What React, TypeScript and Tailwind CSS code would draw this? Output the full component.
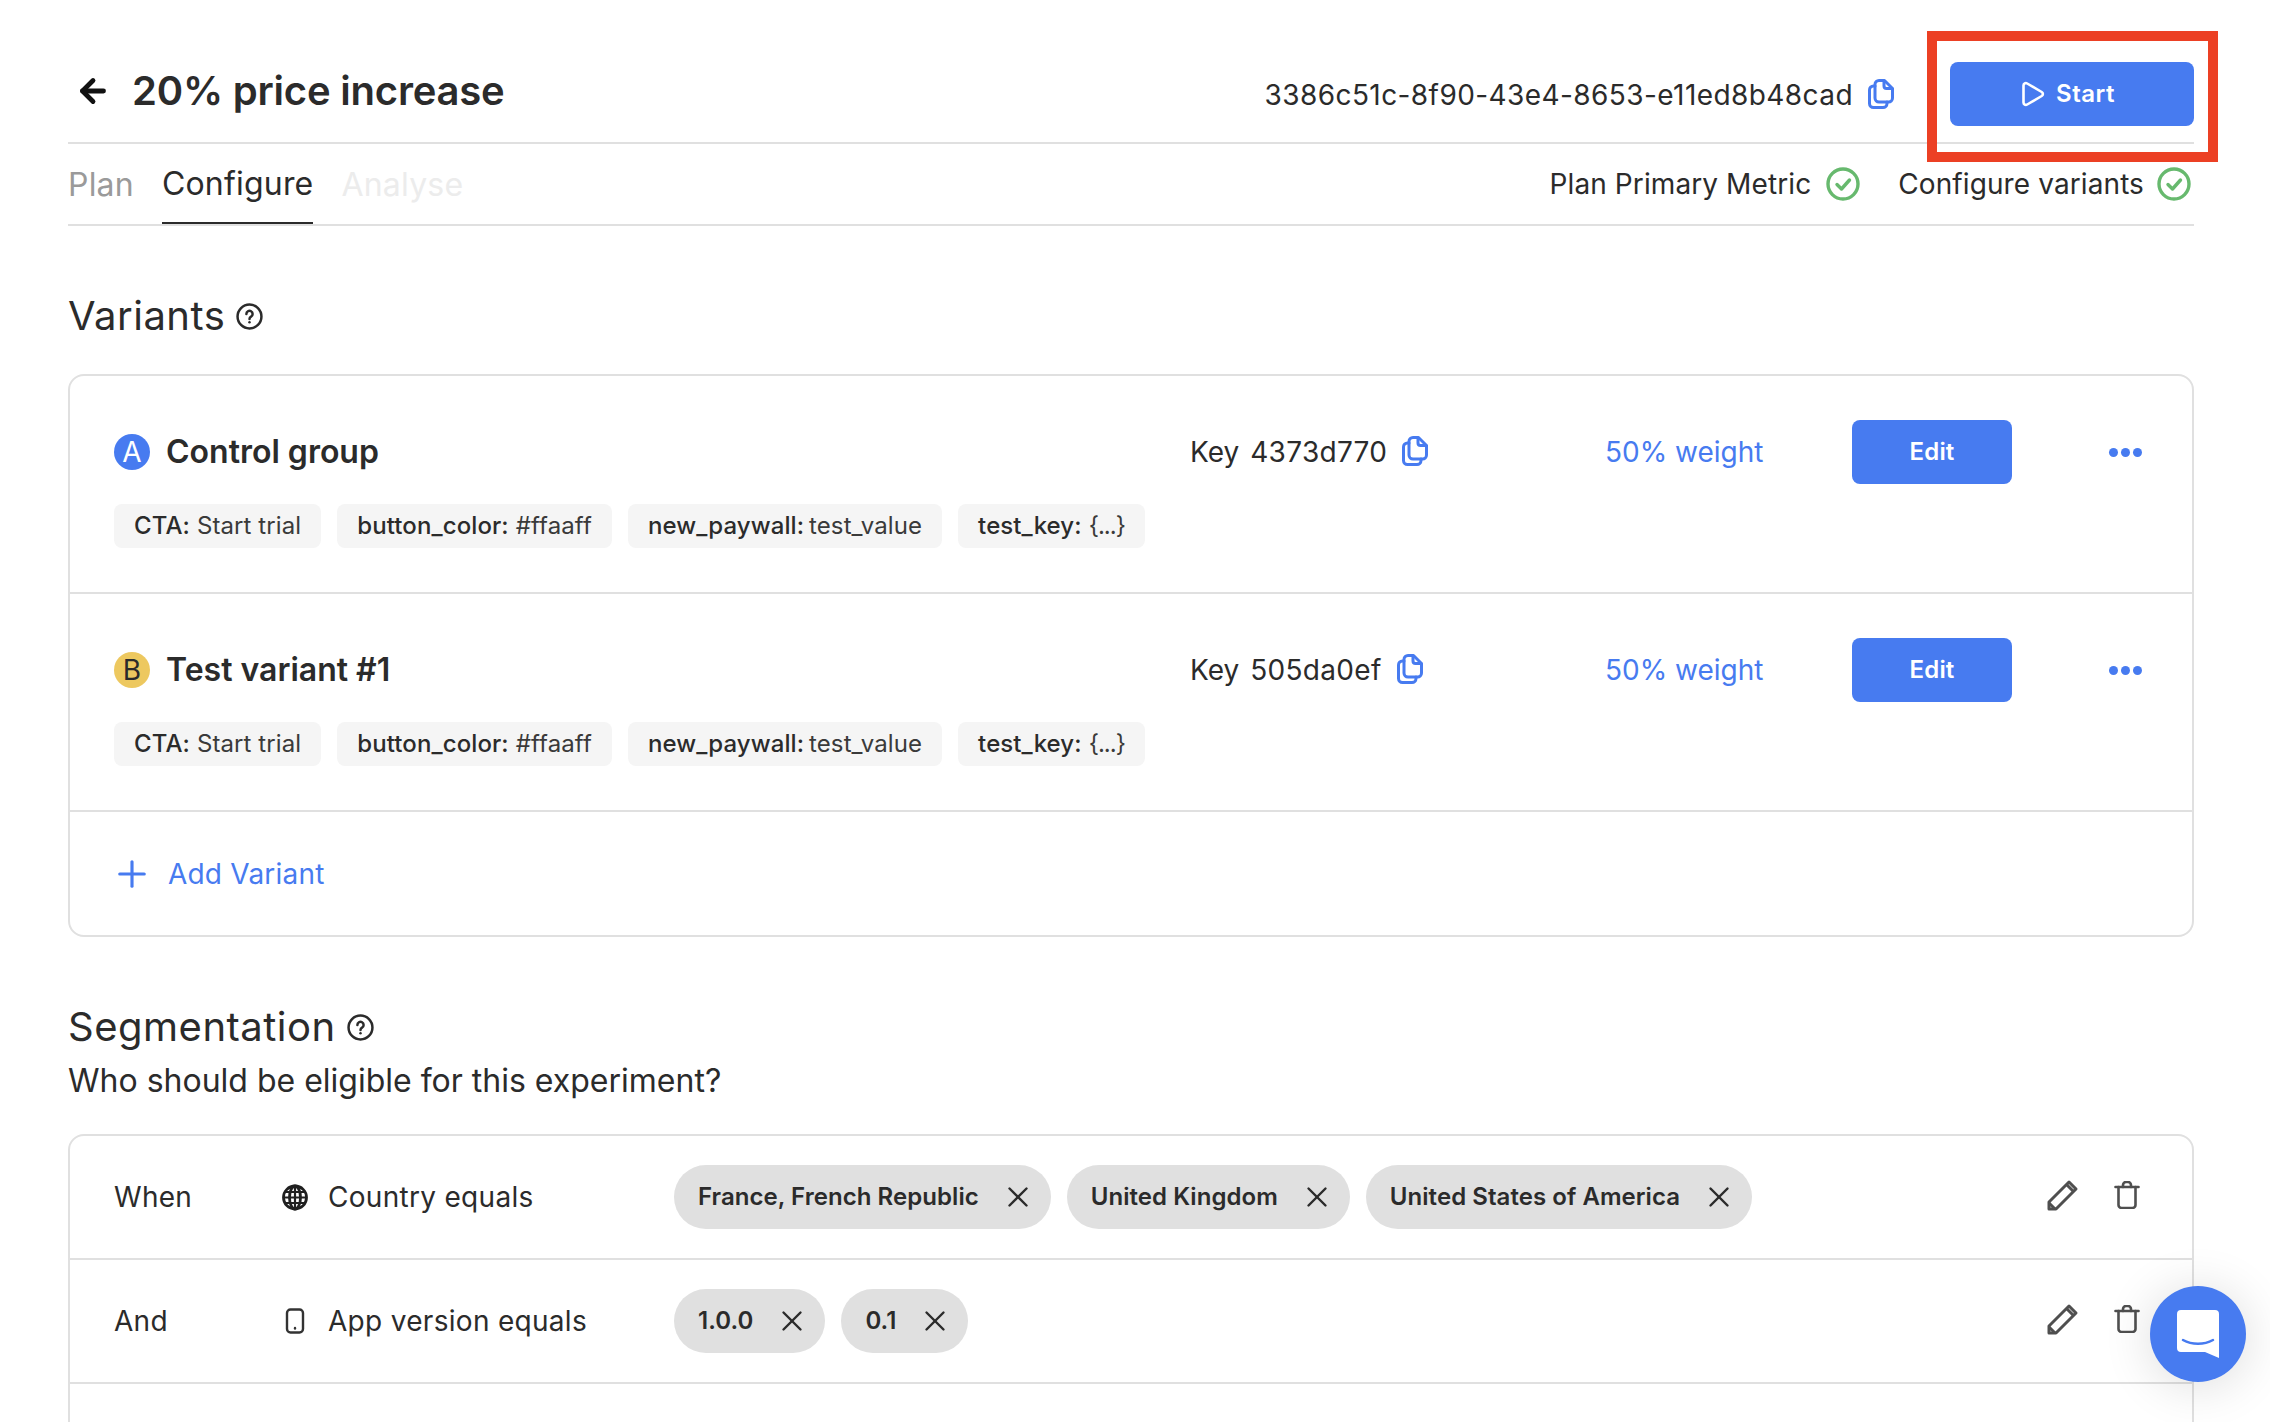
import React from "react";
import { ArrowLeft, Plus, X } from "lucide-react";

const Copy = ({ className = "" }: { className?: string }) => (
  <svg viewBox="0 0 26 30" className={className} fill="none" stroke="#477bf0" strokeWidth="3" strokeLinejoin="round" strokeLinecap="round">
    <path d="M11 1.500h5.500l8 8V19a4 4 0 0 1-4 4H11a4 4 0 0 1-4-4V5.500a4 4 0 0 1 4-4z" />
    <path d="M16 2v5a2.500 2.500 0 0 0 2.500 2.500H24" />
    <path d="M7 7H5.500a4 4 0 0 0-4 4v13.500a4 4 0 0 0 4 4H15a4 4 0 0 0 4-4V23" />
  </svg>
);

const Help = () => (
  <svg viewBox="0 0 26 26" className="w-[27px] h-[27px]" fill="none" stroke="#2b2b2b" strokeWidth="2.400" strokeLinecap="round">
    <circle cx="13" cy="13" r="11.500" />
    <path d="M10 10.500a3 3 0 1 1 4.500 2.600c-1 .6-1.500 1.100-1.500 2.200" />
    <path d="M13 18.500v.1" />
  </svg>
);

const Check = () => (
  <svg viewBox="0 0 34 34" className="w-[34px] h-[34px]" fill="none" stroke="#67b96e" strokeWidth="3.400" strokeLinecap="round" strokeLinejoin="round">
    <circle cx="17" cy="17" r="15" />
    <path d="M11 17.500l4.500 4.500 8-9" />
  </svg>
);

const Pencil = () => (
  <svg viewBox="0 0 32 32" className="w-[32px] h-[32px]" fill="none" stroke="#4f4f4f" strokeWidth="3" strokeLinejoin="round">
    <path d="M2 30v-7L22 3l7 7-20 20z" />
    <path d="M20 6l6 6" />
    <path d="M2 24l6 6" />
  </svg>
);

const Trash = () => (
  <svg viewBox="0 0 26 28" className="w-[26px] h-[28px]" fill="none" stroke="#4f4f4f" strokeWidth="2.600" strokeLinecap="round" strokeLinejoin="round">
    <path d="M1.500 6h23" />
    <path d="M9 6V4a3 3 0 0 1 3-3h2a3 3 0 0 1 3 3v2" />
    <path d="M4.500 6v18a3 3 0 0 0 3 3h11a3 3 0 0 0 3-3V6" />
  </svg>
);

const Globe = () => (
  <svg viewBox="0 0 26 26" className="w-[27px] h-[27px]" fill="none" stroke="#1f1f1f" strokeWidth="2.800">
    <circle cx="13" cy="13" r="11.500" />
    <ellipse cx="13" cy="13" rx="5.500" ry="11.500" />
    <path d="M13 1.500v23M1.500 13h23M3 7.500h20M3 18.500h20" strokeWidth="2.200" />
  </svg>
);

const Phone = () => (
  <svg viewBox="0 0 20 26" className="w-[20px] h-[26px]" fill="none" stroke="#333" strokeWidth="2.400">
    <rect x="2" y="1.500" width="16" height="23" rx="3.500" />
    <path d="M10 20v.5" strokeLinecap="round" />
  </svg>
);

const Chip = ({ k, v, valueClass }: { k: string; v: string; valueClass: string }) => (
  <div className="h-[44px] px-5 flex items-center rounded-lg bg-[#f5f5f5] text-[24px] tracking-[0.1px] whitespace-nowrap text-[#2b2b2b]">
    <span className="font-medium">{k}:</span>
    <span className={valueClass}>{v}</span>
  </div>
);

const Variant = ({ letter, name, keyId, badge, letterColor }: { letter: string; name: string; keyId: string; badge: string; letterColor: string }) => (
  <div className="h-[218px] border-b-2 border-[#e0e0e0] pl-[44px] pr-[50px] pt-[44px] shrink-0">
    <div className="flex items-center h-[64px]">
      <div className="w-[400px] flex items-center shrink-0 grow">
        <div className={`w-[36px] h-[36px] rounded-full flex items-center justify-center text-[28px] ${badge} ${letterColor}`}>{letter}</div>
        <div className="ml-[16px] text-[32px] font-semibold text-[#2b2b2b]">{name}</div>
      </div>
      <div className="w-[415px] flex items-center text-[28px] text-[#2b2b2b] shrink-0">
        <span>Key</span>
        <span className="ml-[11px] tracking-[0.3px]">{keyId}</span>
        <Copy className="ml-[15px] w-[26px] h-[30px] -mt-[2px]" />
      </div>
      <div className="w-[247px] text-[28px] text-[#477bf0] shrink-0">50% weight</div>
      <div className="w-[160px] h-[64px] rounded-lg bg-[#477bf0] text-white text-[24px] font-semibold tracking-[0.2px] flex items-center justify-center shrink-0">Edit</div>
      <div className="ml-[97px] flex gap-[3px] shrink-0">
        <span className="w-[9px] h-[9px] rounded-full bg-[#477bf0]" />
        <span className="w-[9px] h-[9px] rounded-full bg-[#477bf0]" />
        <span className="w-[9px] h-[9px] rounded-full bg-[#477bf0]" />
      </div>
    </div>
    <div className="flex gap-4 mt-[20px]">
      <Chip k="CTA" v="Start trial" valueClass="ml-[7px] text-[#3a3a3a]" />
      <Chip k="button_color" v="#ffaaff" valueClass="ml-[7px] text-[#3a3a3a]" />
      <Chip k="new_paywall" v="test_value" valueClass="ml-[5px] text-[#3a3a3a]" />
      <Chip k="test_key" v="{...}" valueClass="ml-[7px] text-[#3a3a3a] tracking-[-1px]" />
    </div>
  </div>
);

const Pill = ({ label }: { label: string }) => (
  <div className="h-[64px] pl-6 pr-[16px] rounded-full bg-[#e0e0e0] flex items-center text-[24px] font-semibold tracking-[0.05px] text-[#2b2b2b] whitespace-nowrap">
    <span>{label}</span>
    <X className="ml-[22px] w-[34px] h-[34px]" strokeWidth={1.7} color="#2b2b2b" />
  </div>
);

const SegRow = ({ word, icon, text, pills }: { word: string; icon: React.ReactNode; text: string; pills: string[] }) => (
  <div className="h-[124px] border-b-2 border-[#e0e0e0] pl-[44px] pr-[50px] flex items-center shrink-0">
    <div className="w-[168px] text-[28px] tracking-[0.3px] text-[#2b2b2b] shrink-0">{word}</div>
    <div className="w-[26px] flex justify-center shrink-0">{icon}</div>
    <div className="ml-[20px] w-[346px] text-[28px] tracking-[0.3px] text-[#2b2b2b] shrink-0">{text}</div>
    <div className="flex gap-4 grow">
      {pills.map((p) => (
        <Pill key={p} label={p} />
      ))}
    </div>
    <div className="flex items-center gap-[35px] -mt-[5px] shrink-0 pr-[2px]">
      <Pencil />
      <Trash />
    </div>
  </div>
);

export default function App() {
  return (
    <div className="relative h-[1422px] overflow-hidden bg-white pl-[68px] pr-[76px] font-['Inter',sans-serif] text-[#2b2b2b]">
      <header className="h-[144px] pt-[46px] border-b-2 border-[#e0e0e0] flex items-center">
        <ArrowLeft className="ml-[7px] w-[36px] h-[36px] -mt-[6px]" strokeWidth={3.2} color="#111" />
        <h1 className="ml-[21px] -mt-[6px] text-[40px] font-semibold tracking-[-0.2px]">20% price increase</h1>
        <div className="ml-auto flex items-center">
          <span className="text-[28px] tracking-[0.42px] mt-[2px]">3386c51c-8f90-43e4-8653-e11ed8b48cad</span>
          <Copy className="ml-[15px] w-[26px] h-[30px] -mt-[1px]" />
        </div>
        <div className="ml-[56px] w-[244px] h-[64px] pr-2 rounded-lg bg-[#477bf0] text-white text-[24px] font-semibold tracking-[0.5px] flex items-center justify-center">
          <svg viewBox="0 0 24 26" className="w-[24px] h-[26px] mr-[11px]" fill="none" stroke="#fff" strokeWidth="2.600" strokeLinejoin="round">
            <path d="M2.500 4.500c0-2 2-3 3.700-2l14.500 8.500c1.600 1 1.600 3 0 4L6.200 23.500c-1.700 1-3.700 0-3.700-2z" />
          </svg>
          Start
        </div>
      </header>

      <nav className="h-[82px] border-b-2 border-[#e0e0e0] flex items-stretch text-[32px] tracking-[0.2px]">
        <div className="text-[#9a9a9a] h-[80px] pt-[2px] flex items-center">Plan</div>
        <div className="ml-[28px] h-[80px] pt-[2px] flex items-center border-b-[2px] border-[#2b2b2b]">Configure</div>
        <div className="ml-[28px] text-[#ececec] h-[80px] pt-[2px] flex items-center">Analyse</div>
        <div className="ml-auto flex items-center h-[78px] pt-[2px] text-[28px] tracking-[0.1px]">
          <span>Plan Primary Metric</span>
          <span className="ml-[15px]"><Check /></span>
          <span className="ml-[38px]">Configure variants</span>
          <span className="ml-[13px] mr-[3px]"><Check /></span>
        </div>
      </nav>

      <section className="mt-[66px] flex items-center h-[48px]">
        <h2 className="text-[40px] tracking-[0.5px]">Variants</h2>
        <span className="ml-[11px]"><Help /></span>
      </section>

      <div className="mt-[34px] h-[563px] border-2 border-[#e0e0e0] rounded-2xl flex flex-col overflow-hidden">
        <Variant letter="A" name="Control group" keyId="4373d770" badge="bg-[#477bf0]" letterColor="text-white" />
        <Variant letter="B" name="Test variant #1" keyId="505da0ef" badge="bg-[#edc85f]" letterColor="text-[#2b2b2b]" />
        <div className="grow flex items-center pl-[41px] text-[#477bf0] text-[28px] tracking-[0.2px]">
          <Plus className="w-[42px] h-[42px]" strokeWidth={1.8} />
          <span className="ml-[15px]">Add Variant</span>
        </div>
      </div>

      <section className="mt-[66px] flex items-center h-[48px]">
        <h2 className="text-[40px] tracking-[0.5px]">Segmentation</h2>
        <span className="ml-[11px]"><Help /></span>
      </section>
      <p className="mt-[8px] text-[32px] leading-[44px]">Who should be eligible for this experiment?</p>

      <div className="mt-[31px] h-[600px] border-2 border-[#e0e0e0] rounded-2xl flex flex-col">
        <SegRow word="When" icon={<Globe />} text="Country equals" pills={["France, French Republic", "United Kingdom", "United States of America"]} />
        <SegRow word="And" icon={<Phone />} text="App version equals" pills={["1.0.0", "0.1"]} />
      </div>

      <div className="absolute left-[2150px] top-[1286px] w-[96px] h-[96px] rounded-full bg-[#477bf0] flex items-center justify-center shadow-[0_4px_50px_rgba(0,0,0,0.14)]">
        <svg viewBox="0 0 42 48" className="w-[42px] h-[48px]">
          <path d="M4 0h34a4 4 0 0 1 4 4v44l-14-6H4a4 4 0 0 1-4-4V4a4 4 0 0 1 4-4z" fill="#fff" />
          <path d="M6 30c9 5 21 5 30 0" fill="none" stroke="#477bf0" strokeWidth="2.500" strokeLinecap="round" />
        </svg>
      </div>

      <div className="absolute left-[1927px] top-[31px] w-[291px] h-[131px] border-[10px] border-[#ec4024]" />
    </div>
  );
}
